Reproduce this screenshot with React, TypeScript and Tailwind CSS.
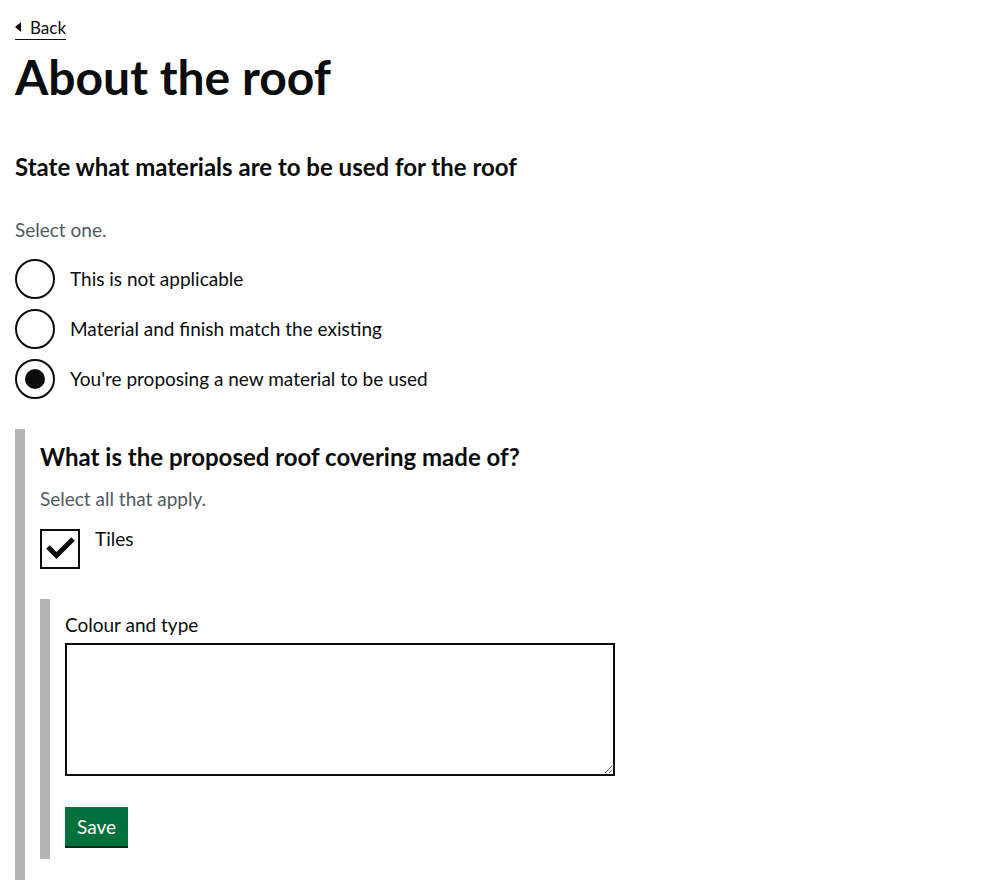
import React, { useState } from "react";

const font = { fontFamily: 'Lato, Arial, sans-serif' };

const options = [
  "This is not applicable",
  "Material and finish match the existing",
  "You're proposing a new material to be used",
];

function Radio({ label, checked, onSelect }: { label: string; checked: boolean; onSelect: () => void }) {
  return (
    <label className="flex h-[50px] cursor-pointer items-center" onClick={onSelect}>
      <span className="flex h-[40px] w-[40px] shrink-0 items-center justify-center rounded-full border-2 border-[#0b0c0c]">
        {checked && <span className="h-[20px] w-[20px] rounded-full bg-[#0b0c0c]" />}
      </span>
      <span className="pl-[15px] text-[19px] leading-[25px] text-[#0b0c0c]">{label}</span>
    </label>
  );
}

export default function App() {
  const [selected, setSelected] = useState(2);
  const [tiles, setTiles] = useState(true);

  return (
    <div style={font} className="h-[880px] overflow-hidden bg-white px-[15px] text-[#0b0c0c]">
      <div className="pt-[14px]">
        <a href="#" className="inline-flex items-center gap-[9px] border-b border-[#0b0c0c] pb-[1px] text-[17px] leading-[21px] text-[#0b0c0c]">
          <svg width="6" height="10" viewBox="0 0 6 10" aria-hidden="true">
            <path d="M6 0 L0 5 L6 10 Z" fill="#0b0c0c" />
          </svg>
          Back
        </a>
      </div>

      <h1 className="mt-[12px] text-[48px] font-bold leading-[50px]">About the roof</h1>

      <h2 className="mt-[50px] text-[24px] font-bold leading-[30px]">State what materials are to be used for the roof</h2>

      <p className="mt-[35px] text-[19px] leading-[25px] text-[#505a5f]">Select one.</p>

      <div className="mt-[12px]">
        {options.map((o, i) => (
          <Radio key={o} label={o} checked={selected === i} onSelect={() => setSelected(i)} />
        ))}
      </div>

      <div className="mt-[25px] border-l-[10px] border-[#b1b4b6] pl-[15px] pb-[40px]">
        <h3 className="pt-[13px] text-[24px] font-bold leading-[30px]">What is the proposed roof covering made of?</h3>
        <p className="mt-[14px] text-[19px] leading-[25px] text-[#505a5f]">Select all that apply.</p>

        <label className="mt-[18px] flex cursor-pointer items-start" onClick={() => setTiles(!tiles)}>
          <span className="relative h-[40px] w-[40px] shrink-0 border-2 border-[#0b0c0c]">
            {tiles && (
              <svg className="absolute left-0 top-0" width="36" height="36" viewBox="0 0 36 36" aria-hidden="true">
                <path d="M6 16 L14.5 24.5 L31 8" fill="none" stroke="#0b0c0c" strokeWidth="5" />
              </svg>
            )}
          </span>
          <span className="pl-[15px] text-[19px] leading-[20px]">Tiles</span>
        </label>

        <div className="mt-[30px] border-l-[10px] border-[#b1b4b6] pl-[15px] pb-[13px]">
          <label className="block pt-[13px] text-[19px] leading-[25px]">Colour and type</label>
          <textarea
            className="mt-[6px] block h-[133px] w-[550px] border-2 border-[#0b0c0c] p-[5px] text-[19px] outline-none"
            style={font}
          />
          <button
            type="button"
            className="mt-[31px] bg-[#00703c] px-[12px] pb-[7px] pt-[8px] text-[19px] leading-[24px] text-white shadow-[0_2px_0_#002d18]"
            style={font}
          >
            Save
          </button>
        </div>
      </div>
    </div>
  );
}
